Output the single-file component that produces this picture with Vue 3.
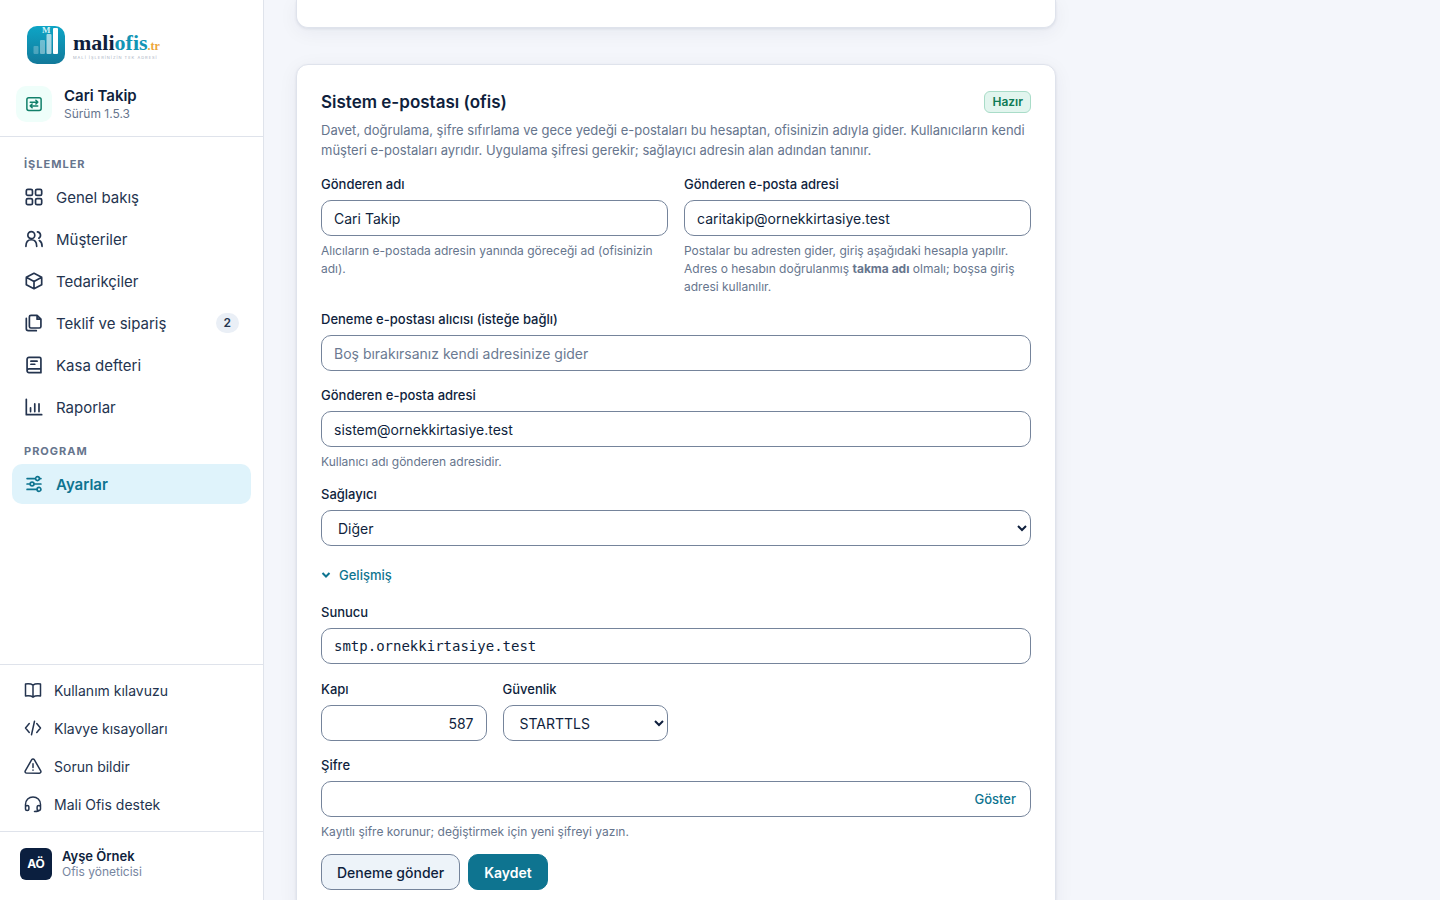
<template>
  <div class="layout">
    <aside class="sidebar">
      <div class="brand">
        <a href="#" class="logo">
          <svg width="38" height="38" viewBox="0 0 38 38" aria-hidden="true">
            <defs>
              <linearGradient id="logoBg" x1="0" y1="0" x2="0" y2="1">
                <stop offset="0" stop-color="#0ea5c6" />
                <stop offset="1" stop-color="#12799a" />
              </linearGradient>
            </defs>
            <rect width="38" height="38" rx="10" fill="url(#logoBg)" />
            <rect x="6.5" y="20" width="5" height="8" rx="1" fill="#fff" fill-opacity="0.25" />
            <rect x="13" y="14" width="5" height="14" rx="1" fill="#fff" fill-opacity="0.4" />
            <rect x="19.5" y="8" width="5" height="20" rx="1" fill="#fff" fill-opacity="0.62" />
            <rect x="26" y="2" width="5" height="26" rx="1" fill="#fff" />
            <text x="15" y="7" class="logo-m">M</text>
          </svg>
          <span class="logo-text">
            <span class="logo-name">mali<span class="logo-ofis">ofis</span><span class="logo-tr">.tr</span></span>
            <span class="logo-slogan">MALİ İŞLERİNİZİN TEK ADRESİ</span>
          </span>
        </a>
        <div class="app">
          <span class="app-icon">
            <svg class="icon" width="18" height="18" viewBox="0 0 24 24">
              <rect x="2.5" y="3.5" width="19" height="17" rx="2.5" />
              <path d="M7 9.5h10M14.5 7l2.5 2.5L14.5 12M17 14.5H7M9.500 12L7 14.500L9.500 17" />
            </svg>
          </span>
          <div>
            <p class="app-name">Cari Takip</p>
            <p class="app-version">Sürüm 1.5.3</p>
          </div>
        </div>
      </div>

      <nav class="nav">
        <template v-for="group in menu" :key="group.title">
          <p class="nav-title">{{ group.title }}</p>
          <a
            v-for="item in group.items"
            :key="item.label"
            href="#"
            class="nav-item"
            :class="{ active: item.label == selected }"
            @click.prevent="selected = item.label"
          >
            <svg class="icon" width="20" height="20" viewBox="-1 -1 26 26"><path :d="item.icon" /></svg>
            <span>{{ item.label }}</span>
            <span v-if="item.count" class="count">{{ item.count }}</span>
          </a>
        </template>
      </nav>

      <div class="links">
        <a v-for="link in links" :key="link.label" href="#" class="link-item">
          <svg class="icon" width="18" height="18" viewBox="0 0 24 24"><path :d="link.icon" /></svg>
          <span>{{ link.label }}</span>
        </a>
      </div>

      <div class="profile">
        <span class="avatar">AÖ</span>
        <div>
          <p class="profile-name">Ayşe Örnek</p>
          <p class="profile-role">Ofis yöneticisi</p>
        </div>
      </div>
    </aside>

    <main class="content">
      <section class="card card-end"></section>

      <section class="card">
        <div class="card-head">
          <h2>Sistem e-postası (ofis)</h2>
          <span class="badge">Hazır</span>
        </div>
        <p class="desc">
          Davet, doğrulama, şifre sıfırlama ve gece yedeği e-postaları bu hesaptan, ofisinizin adıyla gider. Kullanıcıların kendi
          müşteri e-postaları ayrıdır. Uygulama şifresi gerekir; sağlayıcı adresin alan adından tanınır.
        </p>

        <form class="form" @submit.prevent>
          <div class="row two">
            <div class="field">
              <label for="senderName">Gönderen adı</label>
              <input id="senderName" v-model="form.senderName" type="text" />
              <p class="hint">Alıcıların e-postada adresin yanında göreceği ad (ofisinizin adı).</p>
            </div>
            <div class="field">
              <label for="senderMail">Gönderen e-posta adresi</label>
              <input id="senderMail" v-model="form.senderMail" type="email" />
              <p class="hint">
                Postalar bu adresten gider, giriş aşağıdaki hesapla yapılır. Adres o hesabın doğrulanmış <b>takma adı</b> olmalı; boşsa
                giriş adresi kullanılır.
              </p>
            </div>
          </div>

          <div class="field">
            <label for="testMail">Deneme e-postası alıcısı (isteğe bağlı)</label>
            <input id="testMail" v-model="form.testMail" type="email" placeholder="Boş bırakırsanız kendi adresinize gider" />
          </div>

          <div class="field">
            <label for="account">Gönderen e-posta adresi</label>
            <input id="account" v-model="form.account" type="email" />
            <p class="hint">Kullanıcı adı gönderen adresidir.</p>
          </div>

          <div class="field">
            <label for="provider">Sağlayıcı</label>
            <select id="provider" v-model="form.provider">
              <option>Diğer</option>
            </select>
          </div>

          <details class="advanced" open>
            <summary>
              <svg width="10" height="10" viewBox="0 0 10 10"><path d="M1.500 3L5 6.500L8.500 3" /></svg>
              Gelişmiş
            </summary>
            <div class="advanced-body">
              <div class="field">
                <label for="host">Sunucu</label>
                <input id="host" v-model="form.host" class="mono" type="text" />
              </div>
              <div class="row four">
                <div class="field">
                  <label for="port">Kapı</label>
                  <input id="port" v-model="form.port" class="number" type="text" inputmode="numeric" />
                </div>
                <div class="field">
                  <label for="security">Güvenlik</label>
                  <select id="security" v-model="form.security">
                    <option>STARTTLS</option>
                  </select>
                </div>
              </div>
            </div>
          </details>

          <div class="field">
            <label for="password">Şifre</label>
            <div class="password">
              <input id="password" v-model="form.password" :type="showPassword ? 'text' : 'password'" />
              <button type="button" class="toggle" @click="showPassword = !showPassword">
                {{ showPassword ? "Gizle" : "Göster" }}
              </button>
            </div>
            <p class="hint">Kayıtlı şifre korunur; değiştirmek için yeni şifreyi yazın.</p>
          </div>

          <div class="actions">
            <button type="button" class="btn">Deneme gönder</button>
            <button type="submit" class="btn primary">Kaydet</button>
          </div>
        </form>
      </section>
    </main>
  </div>
</template>

<script setup>
import { reactive, ref } from "vue";

const selected = ref("Ayarlar");
const showPassword = ref(false);

const form = reactive({
  senderName: "Cari Takip",
  senderMail: "caritakip@ornekkirtasiye.test",
  testMail: "",
  account: "sistem@ornekkirtasiye.test",
  provider: "Diğer",
  host: "smtp.ornekkirtasiye.test",
  port: "587",
  security: "STARTTLS",
  password: "",
});

const menu = [
  {
    title: "İŞLEMLER",
    items: [
      {
        label: "Genel bakış",
        icon: "M4 2h4a2 2 0 0 1 2 2v4a2 2 0 0 1-2 2H4a2 2 0 0 1-2-2V4a2 2 0 0 1 2-2zM16 2h4a2 2 0 0 1 2 2v4a2 2 0 0 1-2 2h-4a2 2 0 0 1-2-2V4a2 2 0 0 1 2-2zM4 14h4a2 2 0 0 1 2 2v4a2 2 0 0 1-2 2H4a2 2 0 0 1-2-2v-4a2 2 0 0 1 2-2zM16 14h4a2 2 0 0 1 2 2v4a2 2 0 0 1-2 2h-4a2 2 0 0 1-2-2v-4a2 2 0 0 1 2-2z",
      },
      {
        label: "Müşteriler",
        icon: "M13 7a4.500 4.500 0 1 1-9 0a4.500 4.500 0 1 1 9 0M1.500 21.500c0-5.500 3-8.500 7-8.500s7 3 7 8.500M16.500 2.700a4.500 4.500 0 0 1 1.800 8.300M19 14c2.300 1.300 3.500 4 3.500 7.500",
      },
      { label: "Tedarikçiler", icon: "M12 2l10 5.200v9.600L12 22L2 16.800V7.200zM2 7.200l10 5.300l10-5.300M12 12.500V22" },
      {
        label: "Teklif ve sipariş",
        count: 2,
        icon: "M8 2h8l5 5v9.500a2 2 0 0 1-2 2H8a2 2 0 0 1-2-2V4a2 2 0 0 1 2-2zM16 2v5h5M2 6v13.500a2.500 2.500 0 0 0 2.500 2.500H15",
      },
      {
        label: "Kasa defteri",
        icon: "M5.500 2H19a2 2 0 0 1 2 2v18H5.500A2.500 2.500 0 0 1 3 19.500v-15A2.500 2.500 0 0 1 5.500 2zM3 19.500A2.500 2.500 0 0 1 5.500 17H21M8 7h8M8 11h5",
      },
      { label: "Raporlar", icon: "M2 2v20h20M7.500 18v-5M13 18V8M18.500 18V8" },
    ],
  },
  {
    title: "PROGRAM",
    items: [
      {
        label: "Ayarlar",
        icon: "M3 5h11M19 5h2M19 5a2.500 2.500 0 1 1-5 0a2.500 2.500 0 1 1 5 0M3 12h4M12 12h9M12 12a2.500 2.500 0 1 1-5 0a2.500 2.500 0 1 1 5 0M3 19h13M21 19a2.500 2.500 0 1 1-5 0a2.500 2.500 0 1 1 5 0",
      },
    ],
  },
];

const links = [
  {
    label: "Kullanım kılavuzu",
    icon: "M12 5.500C10 4 6 3.500 2 4v16c4-.5 8 0 10 1.500c2-1.500 6-2 10-1.500V4c-4-.5-8 0-10 1.500zM12 5.500v16",
  },
  { label: "Klavye kısayolları", icon: "M7 6l-5 6l5 6M17 6l5 6l-5 6M14 3l-4 18" },
  {
    label: "Sorun bildir",
    icon: "M10.300 3.500L1.700 18.500a2 2 0 0 0 1.700 3h17.200a2 2 0 0 0 1.700-3L13.700 3.500a2 2 0 0 0-3.400 0zM12 9v5M12 17.300v.4",
  },
  {
    label: "Mali Ofis destek",
    icon: "M2 16v-3.500a10 10 0 0 1 20 0V16M2 15.500c0-2 4.500-2 4.500 0V19c0 2-4.500 2-4.500 0zM17.500 15.500c0-2 4.500-2 4.500 0V19c0 2-4.500 2-4.500 0zM21.500 19.500c-1 2-3.500 2.500-7.500 2.500",
  },
];
</script>

<style>
body {
  margin: 0;
  background-color: #f4f6fb;
}
</style>

<style scoped>
* {
  box-sizing: border-box;
}
p,
h2 {
  margin: 0;
}
a {
  color: inherit;
  text-decoration: none;
}
.layout {
  display: flex;
  height: 100vh;
  overflow: hidden;
  background-color: #f4f6fb;
  color: #0f1f3d;
  font-family: Inter, "Noto Sans", sans-serif;
  font-size: 14px;
}
.icon {
  flex: none;
  fill: none;
  stroke: currentColor;
  stroke-width: 2;
  stroke-linecap: round;
  stroke-linejoin: round;
}

/* sidebar */
.sidebar {
  display: flex;
  flex-direction: column;
  flex: none;
  width: 264px;
  border-right: 1px solid #dfe3eb;
  background-color: #fff;
}
.brand {
  display: flex;
  flex-direction: column;
  gap: 22px;
  padding: 26px 16px 14px;
  border-bottom: 1px solid #dfe3eb;
}
.logo {
  display: flex;
  gap: 8px;
  height: 38px;
  padding-left: 11px;
}
.logo svg {
  overflow: visible;
}
.logo-m {
  fill: #d5f3f8;
  font-family: "Liberation Serif", serif;
  font-size: 9px;
  font-weight: bold;
}
.logo-text {
  display: flex;
  flex-direction: column;
  padding-top: 4px;
}
.logo-name {
  font-family: "Liberation Serif", serif;
  font-size: 22px;
  font-weight: bold;
  line-height: 25px;
}
.logo-ofis {
  color: #1295b5;
}
.logo-tr {
  color: #eda63a;
  font-size: 12px;
  line-height: 12px;
}
.logo-slogan {
  color: #a9b1bf;
  font-size: 4px;
  line-height: 6px;
  letter-spacing: 1px;
  white-space: nowrap;
}
.app {
  display: flex;
  align-items: center;
  gap: 12px;
}
.app-icon {
  display: flex;
  align-items: center;
  justify-content: center;
  width: 36px;
  height: 36px;
  border-radius: 10px;
  background-color: #effefa;
  color: #12806a;
}
.app-name {
  font-size: 15px;
  font-weight: 600;
  line-height: 20px;
}
.app-version {
  color: #66758d;
  font-size: 12px;
  line-height: 16px;
}
.nav {
  display: flex;
  flex-direction: column;
  flex: 1;
  gap: 2px;
  padding: 18px 12px;
}
.nav .icon {
  stroke-width: 2.2;
}
.nav-title {
  padding: 0 12px;
  margin-bottom: 2px;
  color: #66758d;
  font-size: 11px;
  font-weight: 700;
  line-height: 18px;
  letter-spacing: 1px;
}
.nav-item + .nav-title {
  margin-top: 13px;
}
.nav-item {
  display: flex;
  align-items: center;
  gap: 12px;
  height: 40px;
  padding: 0 12px;
  border-radius: 10px;
  color: #24344f;
  font-size: 15px;
}
.nav-item.active {
  background-color: #dff3fb;
  color: #0e7490;
  font-weight: 600;
}
.count {
  margin-left: auto;
  padding: 0 8px;
  border-radius: 10px;
  background-color: #eaeff6;
  font-size: 12px;
  font-weight: 600;
  line-height: 20px;
}
.links {
  display: flex;
  flex-direction: column;
  gap: 2px;
  padding: 7px 12px 9px;
  border-top: 1px solid #dfe3eb;
}
.link-item {
  display: flex;
  align-items: center;
  gap: 12px;
  height: 36px;
  padding: 0 12px;
  color: #24344f;
}
.profile {
  display: flex;
  align-items: center;
  gap: 10px;
  padding: 16px 20px 20px;
  border-top: 1px solid #dfe3eb;
}
.avatar {
  width: 32px;
  height: 32px;
  border-radius: 6px;
  background-color: #0b1f3f;
  color: #fff;
  font-size: 12px;
  font-weight: 700;
  line-height: 32px;
  text-align: center;
}
.profile-name {
  font-size: 13px;
  font-weight: 600;
  line-height: 16px;
}
.profile-role {
  color: #7685a0;
  font-size: 12px;
  line-height: 16px;
}

/* settings */
.content {
  display: flex;
  flex-direction: column;
  flex: 1;
  gap: 36px;
  min-width: 0;
  padding: 0 32px;
}
.card {
  flex: none;
  width: 100%;
  max-width: 760px;
  padding: 24px;
  border: 1px solid #dfe3ec;
  border-radius: 12px;
  background-color: #fff;
  box-shadow: 0 1px 3px rgba(15, 31, 61, 0.08), 0 4px 20px rgba(15, 31, 61, 0.06);
}
.card-end {
  height: 28px;
  padding: 0;
  border-top: 0;
  border-radius: 0 0 12px 12px;
}
.card-head {
  display: flex;
  align-items: center;
  justify-content: space-between;
  margin-bottom: 5px;
}
h2 {
  font-size: 17px;
  font-weight: 600;
  line-height: 26px;
}
.badge {
  padding: 0 7px;
  border: 1px solid #a9dcc8;
  border-radius: 6px;
  background-color: #e2f5ee;
  color: #0f7a55;
  font-size: 12px;
  font-weight: 600;
  line-height: 20px;
}
.desc {
  color: #66758d;
  font-size: 13px;
  line-height: 20px;
}
.form {
  display: flex;
  flex-direction: column;
  gap: 14px;
  margin-top: 14px;
}
.row {
  display: grid;
  gap: 16px;
}
.two {
  grid-template-columns: repeat(2, 1fr);
}
.four {
  grid-template-columns: repeat(4, 1fr);
}
.field {
  display: flex;
  flex-direction: column;
  min-width: 0;
}
label {
  margin-bottom: 6px;
  font-size: 13px;
  font-weight: 500;
  line-height: 20px;
}
input,
select {
  width: 100%;
  height: 36px;
  padding: 0 12px;
  border: 1px solid #75849b;
  border-radius: 10px;
  background-color: #fff;
  color: #0f1f3d;
  font-family: inherit;
  font-size: 14px;
}
input::placeholder {
  color: #6b7a92;
}
input.mono {
  font-family: "DejaVu Sans Mono", monospace;
}
input.number {
  text-align: right;
}
.hint {
  margin: 6px 0 -1px;
  color: #66758d;
  font-size: 12px;
  line-height: 18px;
}
summary {
  display: flex;
  align-items: center;
  gap: 8px;
  padding: 5px 0;
  color: #0e7490;
  font-size: 13px;
  font-weight: 500;
  line-height: 20px;
  list-style: none;
  cursor: pointer;
}
summary svg {
  fill: none;
  stroke: currentColor;
  stroke-width: 2;
}
.advanced-body {
  display: flex;
  flex-direction: column;
  gap: 15px;
  margin-top: 12px;
}
.password {
  position: relative;
}
.password input {
  padding-right: 70px;
}
.toggle {
  position: absolute;
  top: 4px;
  right: 5px;
  height: 28px;
  padding: 0 10px;
  border: 0;
  background: none;
  color: #0e7490;
  font-family: inherit;
  font-size: 13px;
  font-weight: 500;
  cursor: pointer;
}
.actions {
  display: flex;
  gap: 8px;
}
.btn {
  height: 36px;
  padding: 0 15px;
  border: 1px solid #75849b;
  border-radius: 10px;
  background-color: #edf3f9;
  color: #0f1f3d;
  font-family: inherit;
  font-size: 14px;
  font-weight: 500;
  cursor: pointer;
}
.btn.primary {
  border-color: #0e7490;
  background-color: #0e7490;
  color: #fff;
  font-weight: 600;
}
</style>
